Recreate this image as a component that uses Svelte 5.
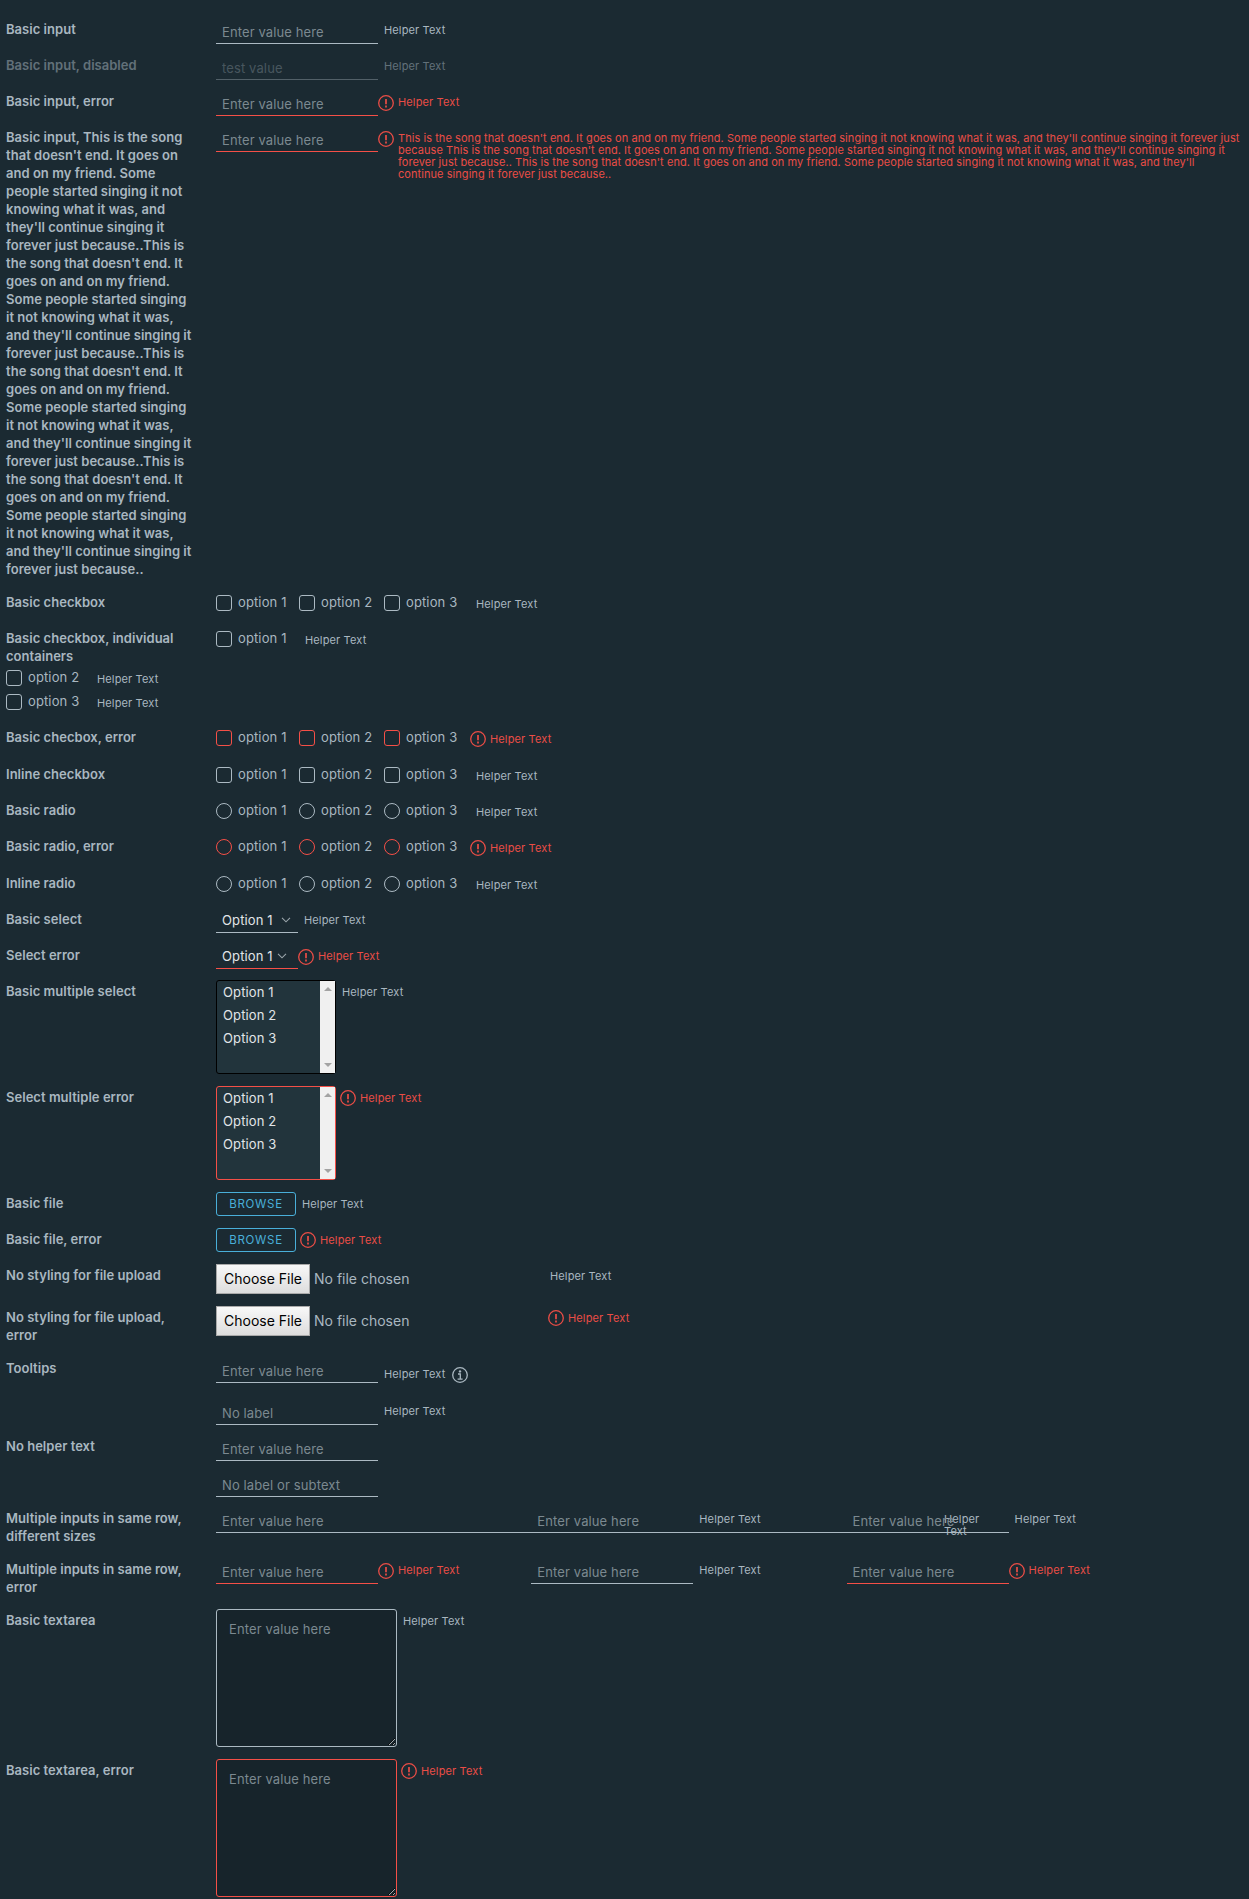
<script>
  const song = [
    "Basic input, This is the song", "that doesn't end. It goes on", "and on my friend. Some",
    "people started singing it not", "knowing what it was, and", "they'll continue singing it",
    "forever just because..This is", "the song that doesn't end. It", "goes on and on my friend.",
    "Some people started singing", "it not knowing what it was,", "and they'll continue singing it",
    "forever just because..This is", "the song that doesn't end. It", "goes on and on my friend.",
    "Some people started singing", "it not knowing what it was,", "and they'll continue singing it",
    "forever just because..This is", "the song that doesn't end. It", "goes on and on my friend.",
    "Some people started singing", "it not knowing what it was,", "and they'll continue singing it",
    "forever just because.."
  ];
  const songHelp = [
    "This is the song that doesn't end. It goes on and on my friend. Some people started singing it not knowing what it was, and they'll continue singing it forever just",
    "because This is the song that doesn't end. It goes on and on my friend. Some people started singing it not knowing what it was, and they'll continue singing it",
    "forever just because.. This is the song that doesn't end. It goes on and on my friend. Some people started singing it not knowing what it was, and they'll",
    "continue singing it forever just because.."
  ];
  const hint = "Enter value here";
  // h is the distance to the next row
  const rows = [
    { h: 36, label: ["Basic input"], kind: "input" },
    { h: 36, label: ["Basic input, disabled"], kind: "input", disabled: true },
    { h: 36, label: ["Basic input, error"], kind: "input", error: true },
    { h: 465, label: song, kind: "input", error: true, help: songHelp },
    { h: 36, label: ["Basic checkbox"], kind: "check" },
    { h: 39, label: ["Basic checkbox, individual", "containers"], kind: "check", options: [1] },
    { h: 24, kind: "loose", options: [2] },
    { h: 36, kind: "loose", options: [3] },
    { h: 37, label: ["Basic checbox, error"], kind: "check", error: true },
    { h: 36, label: ["Inline checkbox"], kind: "check" },
    { h: 36, label: ["Basic radio"], kind: "radio" },
    { h: 37, label: ["Basic radio, error"], kind: "radio", error: true },
    { h: 36, label: ["Inline radio"], kind: "radio" },
    { h: 36, label: ["Basic select"], kind: "select" },
    { h: 36, label: ["Select error"], kind: "select", error: true },
    { h: 106, label: ["Basic multiple select"], kind: "multi" },
    { h: 106, label: ["Select multiple error"], kind: "multi", error: true },
    { h: 36, label: ["Basic file"], kind: "file" },
    { h: 36, label: ["Basic file, error"], kind: "file", error: true },
    { h: 42, label: ["No styling for file upload"], kind: "raw" },
    { h: 51, label: ["No styling for file upload,", "error"], kind: "raw", error: true },
    { h: 42, label: ["Tooltips"], kind: "input", info: true },
    { h: 36, label: [], kind: "input", hint: "No label" },
    { h: 36, label: ["No helper text"], kind: "input", bare: true },
    { h: 36, label: [], kind: "input", hint: "No label or subtext", bare: true },
    { h: 51, label: ["Multiple inputs in same row,", "different sizes"], kind: "sizes" },
    { h: 51, label: ["Multiple inputs in same row,", "error"], kind: "trio" },
    { h: 150, label: ["Basic textarea"], kind: "area" },
    { h: 138, label: ["Basic textarea, error"], kind: "area", error: true }
  ];
</script>

{#snippet helper(error, lines = ["Helper Text"])}
  <div class="helper" class:error class:long={lines.length > 2}>
    {#if error}
      <svg class="icon" viewBox="0 0 16 16"><circle cx="8" cy="8" r="7.3" /><path class="mark" d="M8 3.9v5.3M8 10.6v1.8" /></svg>
    {/if}
    <span class="help">{#each lines as l}<span class="ln">{l}</span>{/each}</span>
  </div>
{/snippet}

{#snippet field(error, placeholder = hint, disabled = false)}
  {#if disabled}
    <input class="text" type="text" value="test value" disabled />
  {:else}
    <input class="text" class:error type="text" {placeholder} />
  {/if}
{/snippet}

{#snippet checks(type, error, options = [1, 2, 3])}
  <div class="checks">
    {#each options as n}
      <div class="opt o{n}"><i class="box {type}" class:error></i><span>option {n}</span></div>
    {/each}
  </div>
{/snippet}

<main>
  {#each rows as r}
    <div class="row {r.kind}" class:disabled={r.disabled} class:info={r.info} style:height="{r.h}px">
      {#if r.label}
        <div class="label">{#each r.label as l}<span class="ln">{l}</span>{/each}</div>
      {/if}
      {#if r.kind === "input"}
        {@render field(r.error, r.hint, r.disabled)}
        {#if !r.bare}{@render helper(r.error, r.help)}{/if}
        {#if r.info}
          <svg class="icon tip" viewBox="0 0 16 16"><circle cx="8" cy="8" r="7.3" /><path d="M6 7h2.3v5M5.6 12.1h5" /><circle class="dot" cx="8" cy="4.4" r="1.2" /></svg>
        {/if}
      {:else if r.kind === "check" || r.kind === "radio" || r.kind === "loose"}
        {@render checks(r.kind, r.error, r.options)}
        {@render helper(r.error)}
      {:else if r.kind === "select"}
        <div class="pick" class:error={r.error}>
          <span>Option 1</span>
          <svg class="chev" viewBox="0 0 10 6"><path d="M1 .8l4 4 4-4" /></svg>
        </div>
        {@render helper(r.error)}
      {:else if r.kind === "multi"}
        <div class="list" class:error={r.error}>
          <div class="items"><span>Option 1</span><span>Option 2</span><span>Option 3</span></div>
          <div class="bar">
            <svg viewBox="0 0 8 4"><path d="M0 4l4-4 4 4z" /></svg>
            <svg viewBox="0 0 8 4"><path d="M0 0l4 4 4-4z" /></svg>
          </div>
        </div>
        {@render helper(r.error)}
      {:else if r.kind === "file"}
        <button class="browse">BROWSE</button>
        {@render helper(r.error)}
      {:else if r.kind === "raw"}
        <div class="upload"><button class="choose">Choose File</button><span>No file chosen</span></div>
        {@render helper(r.error)}
      {:else if r.kind === "sizes"}
        <div class="cell wide">{@render field(false)}{@render helper(false, ["Helper", "Text"])}</div>
        <div class="cell">{@render field(false)}{@render helper(false)}</div>
        <div class="cell">{@render field(false)}{@render helper(false)}</div>
      {:else if r.kind === "trio"}
        <div class="cell">{@render field(true)}{@render helper(true)}</div>
        <div class="cell">{@render field(false)}{@render helper(false)}</div>
        <div class="cell">{@render field(true)}{@render helper(true)}</div>
      {:else if r.kind === "area"}
        <textarea class:error={r.error} placeholder={hint}></textarea>
        {@render helper(r.error)}
      {/if}
    </div>
  {/each}
</main>

<style>
  :global(body) { background: #1b2a32; }
  :global(*) { box-sizing: border-box; }
  main {
    width: 1249px;
    height: 1899px;
    padding: 20px 0 0 6px;
    overflow: hidden;
    background: #1b2a32;
    color: #a9b7c0;
    font: 400 13px/18px Inter, sans-serif;
    letter-spacing: 0.12px;
  }
  .row { display: flex; align-items: flex-start; white-space: nowrap; }
  .label { flex: 0 0 210px; font-weight: 600; letter-spacing: 0.03px; }
  .ln { display: block; }
  .disabled .label, .disabled .helper { opacity: 0.5; }

  input.text {
    flex: 0 0 162px;
    width: 162px;
    height: 24px;
    margin: 0;
    padding: 0 6px;
    border: 0;
    border-bottom: 1px solid #acbac3;
    border-radius: 0;
    background: none;
    color: #acbac3;
    font: 400 13px/20px Inter, sans-serif;
    letter-spacing: 0.12px;
    outline: 0;
  }
  input.text.error { border-color: #f54f47; }
  input.text:disabled { opacity: 0.5; color: #75828a; border-color: #8a979f; }
  ::placeholder { color: #7b8990; opacity: 1; }

  .helper {
    display: flex;
    flex: none;
    gap: 4px;
    padding: 4px 0 0 6px;
    font-size: 11px;
    line-height: 12px;
    letter-spacing: 0.14px;
    color: #a9b7c0;
  }
  .helper.error { padding-left: 0; color: #ea4d46; }
  .helper.long { letter-spacing: 0.06px; }
  .icon { flex: none; width: 16px; height: 16px; margin-top: -1px; fill: none; stroke: currentColor; stroke-width: 1.3; }
  .mark { stroke-width: 1.7; }
  .info .helper { padding-top: 9px; }
  .tip { margin: 8px 0 0 7px; }
  .dot { fill: currentColor; stroke: none; }

  .checks { display: flex; }
  .opt { display: flex; gap: 6px; width: 83px; }
  .opt.o2 { width: 85px; }
  .loose .opt { width: 85px; }
  .opt.o3 { width: 86px; }
  .loose .opt.o3 { width: 85px; }
  .box { flex: none; width: 16px; height: 16px; margin-top: 2px; border: 1px solid #acbac3; border-radius: 3px; }
  .box.radio { border-radius: 50%; }
  .box.error { border-color: #f54f47; }
  .check .helper, .radio .helper, .loose .helper { padding-top: 5px; }
  .check .icon, .radio .icon, .multi .icon, .file .icon, .raw .icon, .area .icon { margin-top: -2px; }

  .pick {
    display: flex;
    justify-content: space-between;
    width: 82px;
    height: 23px;
    padding: 1px 7px 0 6px;
    border-bottom: 1px solid #acbac3;
    color: #e1e5e8;
  }
  .pick.error { padding-right: 11px; border-color: #f54f47; }
  .chev { width: 10px; height: 6px; margin-top: 6px; fill: none; stroke: #9aa5ab; stroke-width: 1.1; }

  .list {
    display: flex;
    width: 120px;
    height: 94px;
    margin-top: -2px;
    border: 1px solid #000;
    border-radius: 3px;
    background: #22343c;
    color: #e1e5e8;
  }
  .list.error { border-color: #f54f47; }
  .items { display: flex; flex: 1; flex-direction: column; padding: 0 0 0 6px; line-height: 23px; }
  .bar { display: flex; flex-direction: column; justify-content: space-between; align-items: center; width: 15px; padding: 6px 0; background: #f0f0f0; }
  .bar svg { width: 8px; height: 4px; fill: #a3a3a3; }
  .multi .helper { padding-left: 6px; }
  .multi .helper.error { padding-left: 4px; }

  .browse {
    width: 80px;
    height: 24px;
    margin: -2px 0 0;
    padding: 0;
    border: 1px solid #49afd9;
    border-radius: 3px;
    background: none;
    color: #49afd9;
    font: 400 11.5px/22px Inter, sans-serif;
    letter-spacing: 0.7px;
  }
  .file .helper.error { padding-left: 4px; }
  .upload { display: flex; align-items: center; gap: 4px; width: 332px; height: 30px; margin-top: -2px; font-size: 14px; letter-spacing: 0; }
  .choose {
    width: 94px;
    height: 30px;
    padding: 0;
    border: 1px solid #a9a9a9;
    background: linear-gradient(#f8f8f8, #dddddd);
    color: #000;
    font: 400 14px/20px Inter, sans-serif;
  }
  .raw .helper { padding-left: 2px; }
  .raw .helper.error { padding-left: 0; }

  .cell { display: flex; flex: 0 0 315.3px; width: 315.3px; }
  .cell.wide input.text { flex-basis: 722px; }

  textarea {
    width: 181px;
    height: 138px;
    margin: -2px 0 0;
    padding: 10px 12px;
    border: 1px solid #acbac3;
    border-radius: 3px;
    background: #17242b;
    color: #acbac3;
    font: 400 13px/18px Inter, sans-serif;
    letter-spacing: 0.12px;
    outline: 0;
  }
  textarea.error { border-color: #f54f47; }
  .area .helper.error { padding-left: 4px; }
</style>
